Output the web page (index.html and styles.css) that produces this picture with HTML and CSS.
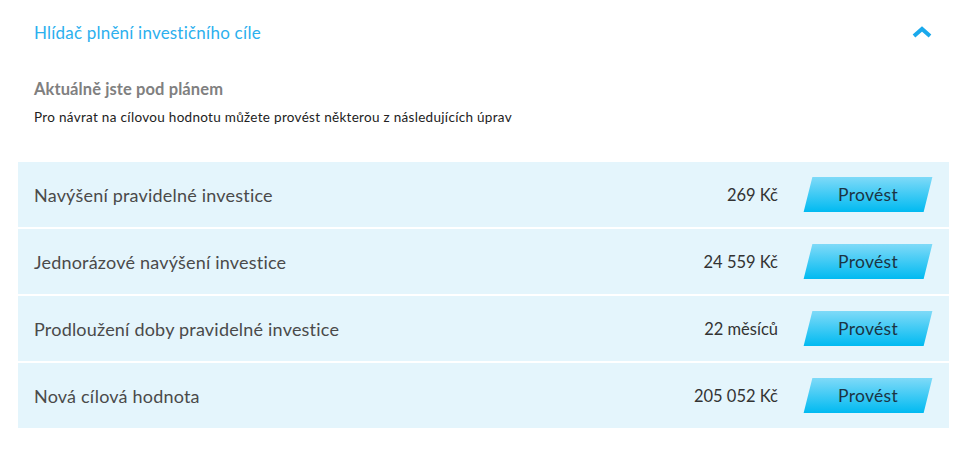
FILE: index.html
```html
<!DOCTYPE html>
<html lang="cs">
<head>
    <meta charset="UTF-8">
    <meta name="viewport" content="width=device-width, initial-scale=1.0">
    <title>Hlídač plnění investičního cíle</title>
    <link rel="stylesheet" href="styles.css">
</head>
<body>
    <div class="panel">
        <div class="panel-head">
            <span class="panel-title">Hlídač plnění investičního cíle</span>
            <svg class="chevron" width="20" height="12" viewBox="0 0 20 12">
                <path d="M2 10 L10 3 L18 10" fill="none" stroke="#1aa9ec" stroke-width="4"/>
            </svg>
        </div>
        <div class="status">
            <h2>Aktuálně jste pod plánem</h2>
            <p>Pro návrat na cílovou hodnotu můžete provést některou z následujících úprav</p>
        </div>
        <div class="options">
            <div class="option">
                <span class="option-name">Navýšení pravidelné investice</span>
                <span class="option-value">269 Kč</span>
                <button class="btn">Provést</button>
            </div>
            <div class="option">
                <span class="option-name">Jednorázové navýšení investice</span>
                <span class="option-value">24 559 Kč</span>
                <button class="btn">Provést</button>
            </div>
            <div class="option">
                <span class="option-name">Prodloužení doby pravidelné investice</span>
                <span class="option-value">22 měsíců</span>
                <button class="btn">Provést</button>
            </div>
            <div class="option">
                <span class="option-name">Nová cílová hodnota</span>
                <span class="option-value">205 052 Kč</span>
                <button class="btn">Provést</button>
            </div>
        </div>
    </div>
</body>
</html>
```

FILE: styles.css
```css
body { margin: 0; padding: 0; background: #fff; font-family: Lato, 'Open Sans', sans-serif; color: #333; }
.panel { width: 973px; padding: 0 0 28px 0; }
.panel-head { display: flex; align-items: center; justify-content: space-between; padding: 20px 41px 0 34px; height: 24px; }
.panel-title { color: #2cb0ee; font-size: 17px; letter-spacing: 0.2px; }
.chevron { display: block; }
.status { padding: 35px 34px 0 34px; }
.status h2 { margin: 0; font-size: 16.5px; font-weight: bold; color: #808080; line-height: 20px; letter-spacing: 0.1px; }
.status p { margin: 10px 0 0 0; font-size: 13.5px; color: #222; line-height: 16px; letter-spacing: 0.3px; }
.options { margin: 37px 24px 0 18px; display: flex; flex-direction: column; gap: 2px; }
.option { display: flex; align-items: center; height: 65px; padding: 0 17px 0 16px; background: #e4f5fc; }
.option-name { flex: 1; font-size: 18px; color: #4a4a4a; letter-spacing: 0.2px; }
.option-value { font-size: 16.5px; color: #333; margin-right: 26px; }
.btn { position: relative; width: 128px; height: 35px; border: none; background: none; padding: 0; font-family: inherit; font-size: 17.5px; color: #1b3444; cursor: pointer; z-index: 0; letter-spacing: 0.3px; }
.btn::before { content: ''; position: absolute; left: 4px; right: 4px; top: 0; bottom: 0; background: linear-gradient(180deg, #7fdaf8 0%, #00baf1 100%); transform: skewX(-14deg); z-index: -1; }
```
